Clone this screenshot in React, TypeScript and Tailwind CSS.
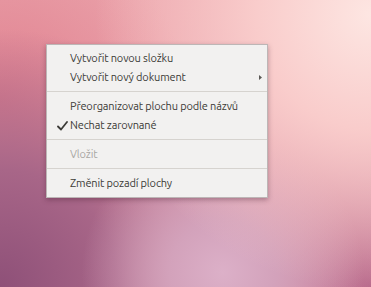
import React from "react";

const Sep = () => (
  <div className="h-[10px] pt-[4px]">
    <div className="h-px w-full bg-[#d6d3cf]" />
  </div>
);

const Item = ({
  label,
  checked,
  disabled,
  submenu,
}: {
  label: string;
  checked?: boolean;
  disabled?: boolean;
  submenu?: boolean;
}) => (
  <div
    className={`relative h-[19px] flex items-center pl-[23px] pr-2 ${
      disabled ? "text-[#a8a6a3]" : "text-[#3c3b37]"
    }`}
  >
    {checked && (
      <svg
        className="absolute left-[10px] top-[5px]"
        width="11"
        height="10"
        viewBox="0 0 11 10"
      >
        <path
          d="M1 5.5 L4 8.5 L10 1"
          fill="none"
          stroke="#3c3b37"
          strokeWidth="1.8"
          strokeLinecap="round"
          strokeLinejoin="round"
        />
      </svg>
    )}
    <span className="leading-none">{label}</span>
    {submenu && (
      <svg
        className="absolute right-[5px] top-[7px]"
        width="3"
        height="5"
        viewBox="0 0 3 5"
      >
        <path d="M0 0 L3 2.5 L0 5 Z" fill="#5a5955" />
      </svg>
    )}
  </div>
);

export default function App() {
  return (
    <div className="w-[371px] h-[287px] overflow-hidden relative bg-[radial-gradient(circle_at_100%_5%,#fde6e2_0%,#f9cccb_25%,transparent_60%),radial-gradient(circle_at_60%_95%,#dcb0c8_0%,#d3a2bb_15%,transparent_40%),radial-gradient(circle_at_0%_100%,#8e5078_0%,#a86688_25%,transparent_55%),radial-gradient(circle_at_100%_100%,#b86a8c_0%,transparent_45%),radial-gradient(circle_at_0%_35%,#e0808f_0%,transparent_45%),linear-gradient(135deg,#eba6ad_0%,#eba2aa_30%,#e6a0ac_55%,#f0b0b6_100%)] font-['Ubuntu','Noto_Sans','Open_Sans',sans-serif]">
      <div className="absolute left-[46px] top-[44px] w-[222px] bg-[#f2f1f0] border border-[#bdb6b6] shadow-[0_2px_5px_rgba(60,20,40,0.35)] pt-[4px] pb-[4px] text-[11px] tracking-[-0.15px]">
        <Item label="Vytvořit novou složku" />
        <Item label="Vytvořit nový dokument" submenu />
        <Sep />
        <Item label="Přeorganizovat plochu podle názvů" />
        <Item label="Nechat zarovnané" checked />
        <Sep />
        <Item label="Vložit" disabled />
        <Sep />
        <Item label="Změnit pozadí plochy" />
      </div>
    </div>
  );
}
